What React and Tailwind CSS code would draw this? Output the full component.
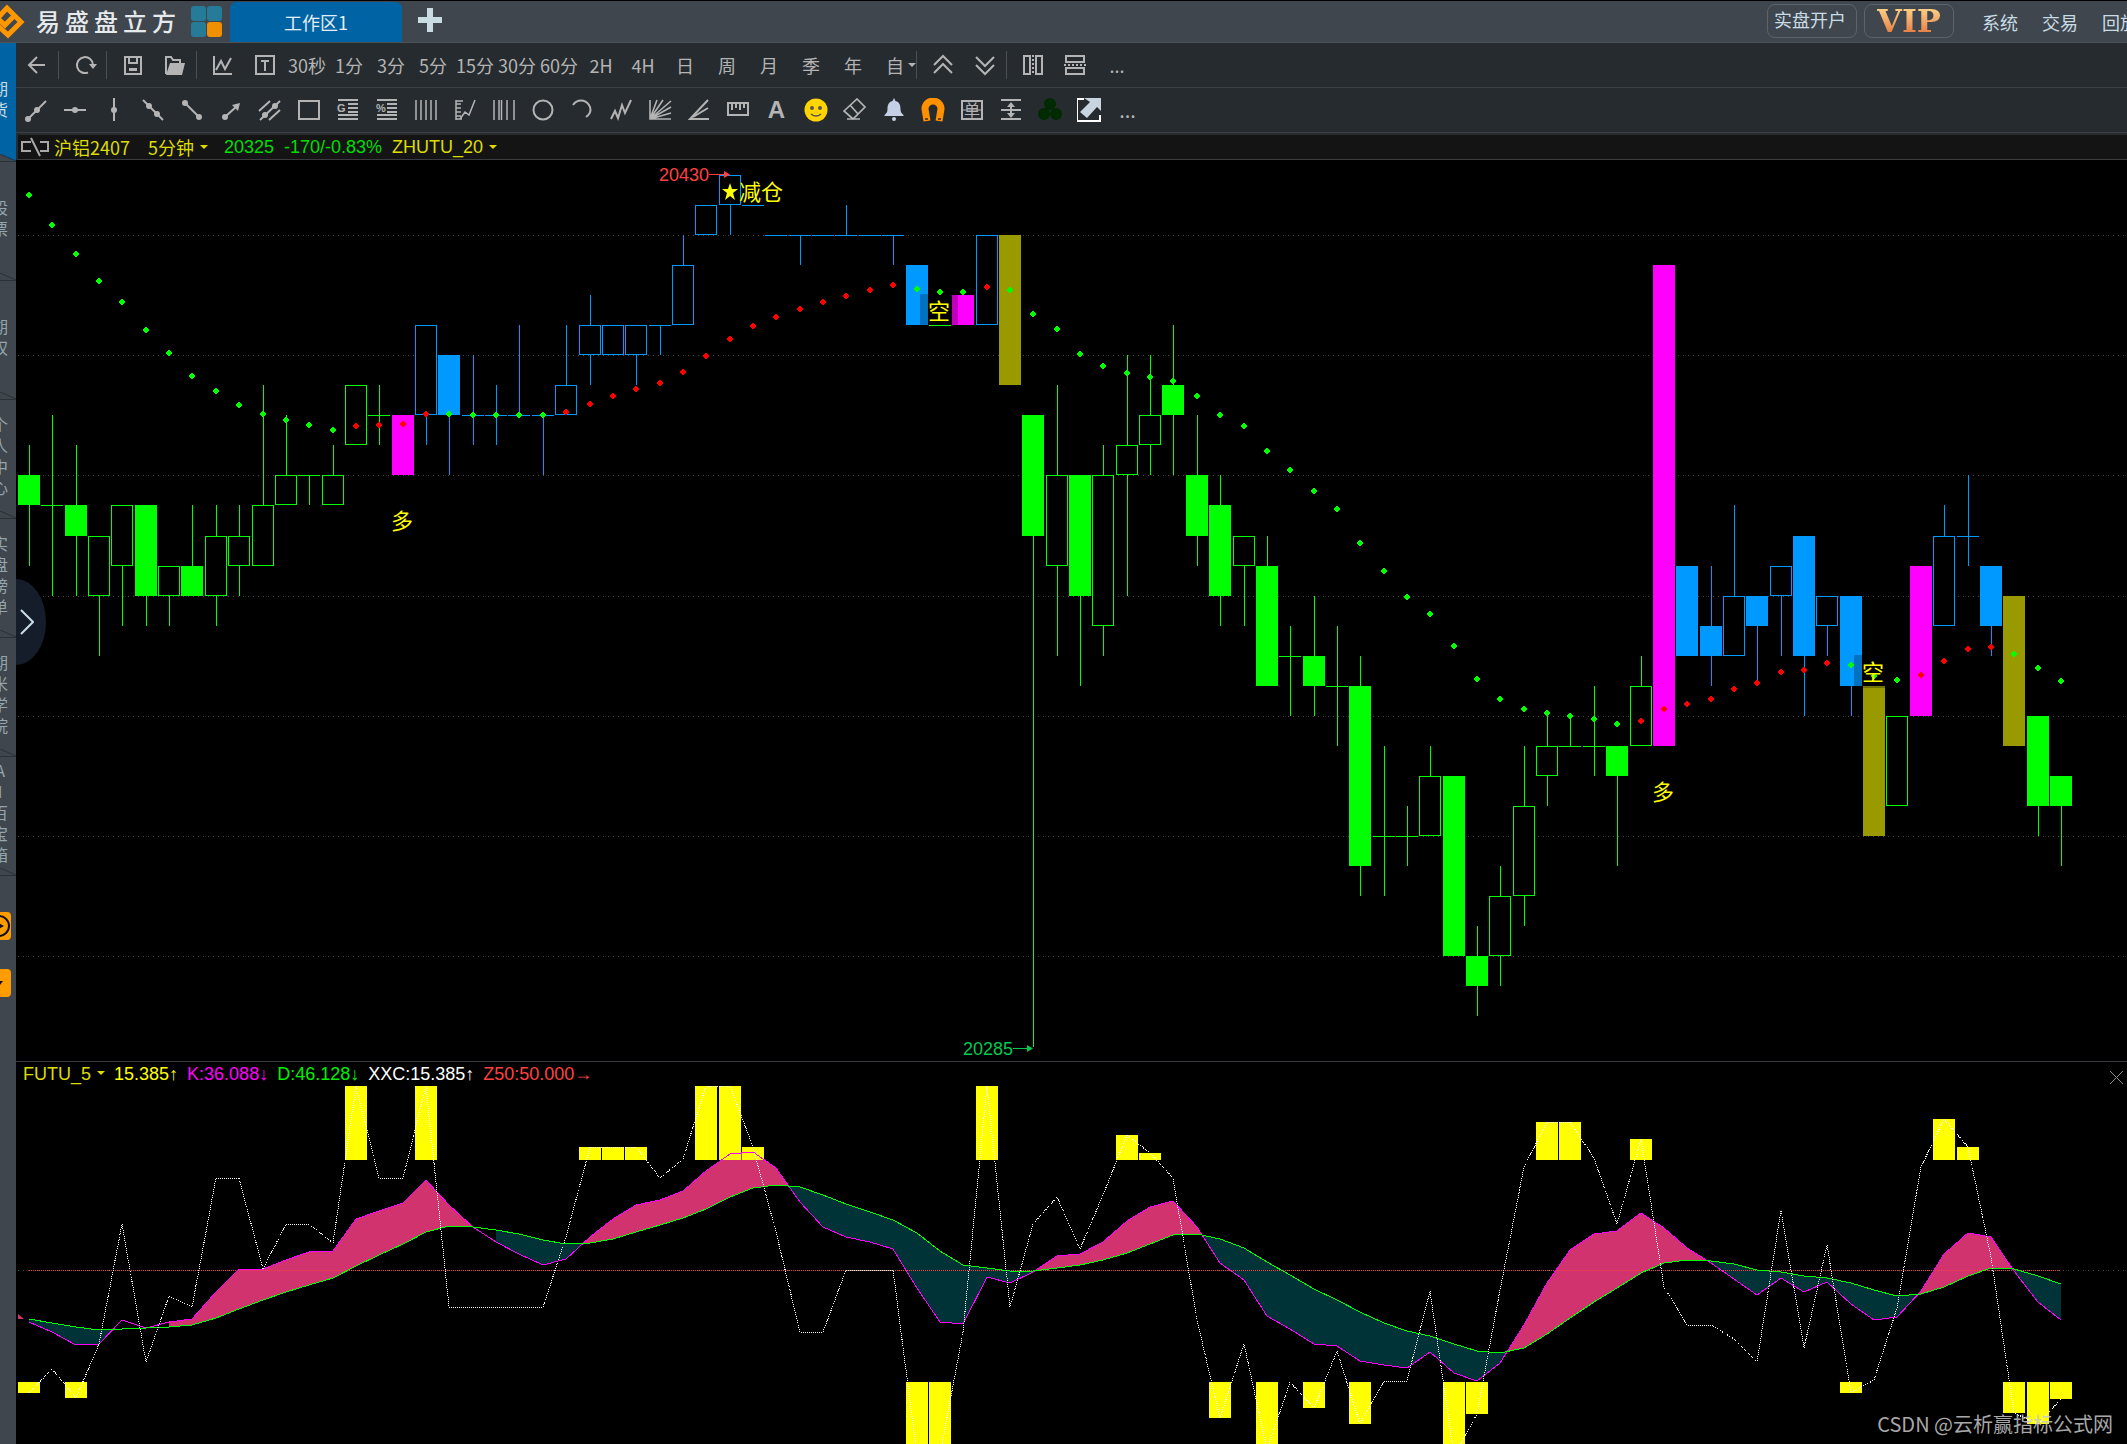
import React, { useState } from 'react';

const GREEN = '#00ff00';
const BLUE = '#0099ff';
const MAGENTA = '#ff00ff';
const OLIVE = '#999900';

const COLORS = { G: GREEN, B: BLUE, M: MAGENTA, Y: OLIVE };

// [color, filled, body top, body bottom, high, low], counted in ticks of 5 below 20430
const candles = [
  ['G', 1, 10, 11, 9, 13], ['G', 0, 11, 11, 8, 14], ['G', 1, 11, 12, 9, 14], ['G', 0, 12, 14, 12, 16],
  ['G', 0, 11, 13, 11, 15], ['G', 1, 11, 14, 11, 15], ['G', 0, 13, 14, 13, 15], ['G', 1, 13, 14, 11, 14],
  ['G', 0, 12, 14, 11, 15], ['G', 0, 12, 13, 11, 14], ['G', 0, 11, 13, 7, 13], ['G', 0, 10, 11, 8, 11],
  ['G', 0, 10, 10, 10, 11], ['G', 0, 10, 11, 9, 11], ['G', 0, 7, 9, 7, 9], ['G', 0, 8, 8, 7, 9],
  ['M', 1, 8, 10, 8, 10], ['B', 0, 5, 8, 5, 9], ['B', 1, 6, 8, 6, 10], ['B', 0, 8, 8, 6, 9],
  ['B', 0, 8, 8, 7, 9], ['B', 0, 8, 8, 5, 8], ['B', 0, 8, 8, 8, 10], ['B', 0, 7, 8, 5, 8],
  ['B', 0, 5, 6, 4, 7], ['B', 0, 5, 6, 5, 6], ['B', 0, 5, 6, 5, 7], ['B', 0, 5, 5, 5, 6],
  ['B', 0, 3, 5, 2, 5], ['B', 0, 1, 2, 1, 2], ['B', 0, 0, 1, 0, 2], ['B', 0, 1, 1, 1, 1],
  ['B', 0, 2, 2, 2, 2], ['B', 0, 2, 2, 2, 3], ['B', 0, 2, 2, 2, 2], ['B', 0, 2, 2, 1, 2],
  ['B', 0, 2, 2, 2, 2], ['B', 0, 2, 2, 2, 3], ['B', 1, 3, 5, 3, 5], ['G', 0, 5, 5, 5, 5],
  ['M', 1, 4, 5, 4, 5], ['B', 0, 2, 5, 2, 5], ['Y', 1, 2, 7, 2, 7], ['G', 1, 8, 12, 8, 29],
  ['G', 0, 10, 13, 7, 16], ['G', 1, 10, 14, 10, 17], ['G', 0, 10, 15, 9, 16], ['G', 0, 9, 10, 6, 14],
  ['G', 0, 8, 9, 6, 10], ['G', 1, 7, 8, 5, 10], ['G', 1, 10, 12, 8, 13], ['G', 1, 11, 14, 10, 15],
  ['G', 0, 12, 13, 12, 15], ['G', 1, 13, 17, 12, 17], ['G', 0, 16, 16, 15, 18], ['G', 1, 16, 17, 14, 18],
  ['G', 0, 17, 17, 15, 19], ['G', 1, 17, 23, 16, 24], ['G', 0, 22, 22, 19, 24], ['G', 0, 22, 22, 21, 23],
  ['G', 0, 20, 22, 19, 22], ['G', 1, 20, 26, 20, 26], ['G', 1, 26, 27, 25, 28], ['G', 0, 24, 26, 23, 27],
  ['G', 0, 21, 24, 19, 25], ['G', 0, 19, 20, 18, 21], ['G', 0, 19, 19, 18, 19], ['G', 0, 19, 19, 17, 20],
  ['G', 1, 19, 20, 19, 23], ['G', 0, 17, 19, 16, 19], ['M', 1, 3, 19, 3, 19], ['B', 1, 13, 16, 13, 16],
  ['B', 1, 15, 16, 13, 17], ['B', 0, 14, 16, 11, 16], ['B', 1, 14, 15, 14, 17], ['B', 0, 13, 14, 13, 16],
  ['B', 1, 12, 16, 12, 18], ['B', 0, 14, 15, 14, 16], ['B', 1, 14, 17, 14, 18], ['Y', 1, 17, 22, 17, 22],
  ['G', 0, 18, 21, 18, 21], ['M', 1, 13, 18, 13, 18], ['B', 0, 12, 15, 11, 15], ['B', 0, 12, 12, 10, 13],
  ['B', 1, 13, 15, 13, 16], ['Y', 1, 14, 19, 14, 19], ['G', 1, 18, 21, 18, 22], ['G', 1, 20, 21, 20, 23],
];

const average = [
  195, 225, 254, 281, 302, 330, 353, 376, 391, 405, 414, 420, 425, 430, 426, 425, 424, 414, 414, 415, 415, 415,
  415, 412, 404, 396, 389, 383, 372, 356, 339, 326, 317, 309, 302, 296, 290, 285, 289, 292, 292, 287, 290, 314,
  329, 354, 366, 373, 377, 381, 396, 415, 426, 451, 470, 491, 509, 543, 571, 597, 614, 646, 679, 699, 709, 713,
  716, 719, 724, 721, 709, 704, 699, 689, 683, 672, 670, 663, 665, 676, 680, 675, 661, 649, 647, 654, 668, 681,
];

// runs of bars where the average is rising
const rising = [[14, 17], [23, 37], [41, 41], [69, 77], [81, 84]];

const xxc = [
  1393, 1369, 1398, 1344, 1224, 1362, 1296, 1307, 1178, 1178, 1269, 1224, 1224, 1243, 1086, 1178, 1178, 1086,
  1307, 1307, 1307, 1307, 1307, 1237, 1147, 1147, 1147, 1178, 1159, 1086, 1086, 1147, 1232, 1332, 1332, 1270,
  1270, 1270, 1455, 1455, 1332, 1086, 1307, 1224, 1197, 1249, 1195, 1135, 1153, 1178, 1320, 1418, 1344, 1450,
  1382, 1408, 1351, 1424, 1381, 1381, 1291, 1455, 1414, 1290, 1167, 1122, 1122, 1158, 1224, 1139, 1287, 1325,
  1325, 1339, 1362, 1210, 1348, 1245, 1393, 1380, 1308, 1167, 1119, 1147, 1257, 1413, 1424, 1399,
];

const kLine = [
  1322, 1332, 1345, 1344, 1320, 1328, 1322, 1319, 1292, 1269, 1269, 1260, 1252, 1251, 1219, 1211, 1203, 1180,
  1205, 1227, 1242, 1254, 1265, 1259, 1237, 1219, 1205, 1200, 1191, 1171, 1154, 1152, 1168, 1202, 1227, 1237,
  1242, 1249, 1288, 1322, 1324, 1277, 1283, 1272, 1256, 1254, 1242, 1221, 1207, 1201, 1227, 1263, 1280, 1316,
  1329, 1344, 1346, 1361, 1365, 1368, 1352, 1373, 1381, 1363, 1325, 1283, 1250, 1234, 1231, 1213, 1228, 1248,
  1263, 1279, 1295, 1278, 1292, 1282, 1304, 1320, 1317, 1291, 1254, 1233, 1237, 1271, 1302, 1320,
];

const dLine = [
  1319, 1323, 1327, 1330, 1329, 1328, 1327, 1325, 1318, 1309, 1300, 1292, 1285, 1278, 1266, 1255, 1244, 1232,
  1226, 1227, 1230, 1234, 1240, 1244, 1243, 1239, 1232, 1225, 1218, 1209, 1197, 1188, 1185, 1187, 1195, 1204,
  1212, 1220, 1233, 1251, 1265, 1268, 1271, 1271, 1268, 1265, 1260, 1253, 1244, 1235, 1234, 1239, 1248, 1262,
  1275, 1289, 1300, 1312, 1323, 1331, 1336, 1344, 1351, 1353, 1348, 1334, 1318, 1302, 1288, 1273, 1263, 1260,
  1261, 1264, 1270, 1272, 1276, 1278, 1283, 1290, 1296, 1294, 1287, 1276, 1268, 1269, 1276, 1284,
];

const barX = (i) => Math.round(18 + i * 23.356);
const midX = (i) => barX(i) + 11;
const tickY = (t) => Math.round(174.8 + t * 30.06);
const toPoints = (values) => values.map((v, i) => `${midX(i)},${v}`).join(' ');
const isRising = (i) => rising.some(([from, to]) => i >= from && i <= to);

const PINK = '#d1336f';
const TEAL = '#003338';
const unfilled = [4, 5, 19];

function bandPieces() {
  const pieces = [];
  for (let i = 0; i < kLine.length - 1; i++) {
    if (unfilled.includes(i)) continue;
    const x1 = midX(i);
    const x2 = midX(i + 1);
    const a = dLine[i] - kLine[i];
    const b = dLine[i + 1] - kLine[i + 1];
    if (a * b >= 0) {
      pieces.push([a + b > 0 ? PINK : TEAL, `${x1},${kLine[i]} ${x2},${kLine[i + 1]} ${x2},${dLine[i + 1]} ${x1},${dLine[i]}`]);
    } else {
      const r = a / (a - b);
      const cx = x1 + (x2 - x1) * r;
      const cy = kLine[i] + (kLine[i + 1] - kLine[i]) * r;
      pieces.push([a > 0 ? PINK : TEAL, `${x1},${kLine[i]} ${cx},${cy} ${x1},${dLine[i]}`]);
      if (i !== 3) pieces.push([b > 0 ? PINK : TEAL, `${x2},${kLine[i + 1]} ${cx},${cy} ${x2},${dLine[i + 1]}`]);
    }
  }
  return pieces;
}

function Icon({ children, size = 24, sw = 2 }) {
  return (
    <svg width={size} height={size} viewBox="0 0 24 24" fill="none" stroke="#b4b4b4" strokeWidth={sw} aria-hidden="true">
      {children}
    </svg>
  );
}

function Dot({ x, y }) {
  return <circle cx={x} cy={y} r="3" fill="#b4b4b4" stroke="none" />;
}

function Caret({ className }) {
  return (
    <svg width="8" height="5" viewBox="0 0 8 5" className={className} aria-hidden="true">
      <path d="M0 0h8L4 4z" fill="currentColor" />
    </svg>
  );
}

const fileIcons = {
  back: <Icon><path d="M20 12H5M12 4l-8 8 8 8" /></Icon>,
  refresh: <Icon><path d="M15 19.5A8 8 0 1 1 20 12" /><path d="M16 11h8l-4 5z" fill="#b4b4b4" stroke="none" /></Icon>,
  save: <Icon><path d="M4 4h16v17H4zM8 4v6h8V4M8 16h8" /><path d="M8 17h8" /></Icon>,
  open: <Icon><path d="M3 21V4h5l2 3h7v3" /><path d="M7 10h15l-3 12H3z" fill="#b4b4b4" stroke="none" /></Icon>,
  line: <Icon><path d="M3 3v18h18M5 17l5-9 4 8 6-11" /></Icon>,
  text: <Icon><path d="M3 3h18v18H3zM8 8h8M12 8v10" /></Icon>,
};

const drawIcons = [
  ['射线', <Icon><path d="M4 21L22 3" /><Dot x={4} y={21} /><Dot x={13} y={12} /></Icon>],
  ['水平线', <Icon><path d="M1 12h22" /><Dot x={12} y={12} /></Icon>],
  ['垂直线', <Icon><path d="M12 0v23" /><Dot x={12} y={12} /></Icon>],
  ['直线', <Icon><path d="M2 2l20 20" /><Dot x={8} y={8} /><Dot x={16} y={16} /></Icon>],
  ['线段', <Icon><path d="M5 5l14 14" /><Dot x={5} y={5} /><Dot x={19} y={19} /></Icon>],
  ['箭头', <Icon><path d="M6 19L18 8" /><path d="M21 5l-2 8-6-6z" fill="#b4b4b4" stroke="none" /><Dot x={6} y={19} /></Icon>],
  ['平行线', <Icon><path d="M2 22L22 3M1 13L12 3M11 22l11-10" /><Dot x={7} y={17} /><Dot x={17} y={8} /></Icon>],
  ['矩形', <Icon><path d="M2 3h20v18H2z" /></Icon>],
  ['黄金分割', (
    <Icon>
      <path d="M2 2h20M12 6h10M12 10h10M12 14h10M2 17h20M2 21h20" />
      <text x="1" y="14" fontSize="11" fontWeight="700" fontFamily="Liberation Sans, sans-serif" fill="#b4b4b4" stroke="none">G</text>
    </Icon>
  )],
  ['百分比', (
    <Icon>
      <path d="M2 2h20M12 6h10M12 10h10M12 14h10M2 17h20M2 21h20" />
      <text x="1" y="14" fontSize="11" fontWeight="700" fontFamily="Liberation Sans, sans-serif" fill="#b4b4b4" stroke="none">%</text>
    </Icon>
  )],
  ['周期线', <Icon sw={1.5}><path d="M2 2v20M7 2v20M12 2v20M17 2v20M22 2v20" /></Icon>],
  ['波段', <Icon sw={1.5}><path d="M3 2v20M3 3h7M3 6h5M3 10h5M3 14h5M3 18h5M3 21h6M7 21l5-7 4 3 6-15" /></Icon>],
  ['斐波那契', <Icon sw={1.5}><path d="M2 2v20M7 2v20M9.500 2v20M15 2v20M22 2v20" /></Icon>],
  ['圆', <Icon><circle cx="12" cy="12" r="9.500" /></Icon>],
  ['圆弧', <Icon><path d="M3 7c4-6 12-6 16 0 3 5 1 9-3 12" /></Icon>],
  ['折线', <Icon><path d="M2 21l4-8 3 7 4-13 3 8 6-13" /></Icon>],
  ['扇形', <Icon sw={1.6}><path d="M2 2v19h21M2 21L9 2M2 21L15 2M2 21L23 3M2 21L23 9M2 21L23 15" /></Icon>],
  ['角度线', <Icon><path d="M21 2L3 21h19M6 19l15-9" /></Icon>],
  ['标尺', <Icon><path d="M2 5h20v12H2z" /><path d="M6 6v6M10 6v4M14 6v6M18 6v4" /></Icon>],
  ['文字', <span className="font-['Liberation_Sans',sans-serif] text-2xl leading-6 font-bold text-[#b4b4b4]">A</span>],
  ['表情', (
    <Icon>
      <circle cx="12" cy="12" r="11.500" fill="#ffd400" stroke="none" />
      <circle cx="8" cy="10" r="2" fill="#555" stroke="none" />
      <circle cx="16" cy="10" r="2" fill="#555" stroke="none" />
      <path d="M7 16c3 2.500 7 2.500 10 0" stroke="#555" strokeWidth="1.500" />
    </Icon>
  )],
  ['橡皮', <Icon sw={1.7}><path d="M1 13L14 1l8 8L10 21zM7 7l8 9M4 21h13" /></Icon>],
  ['预警', (
    <Icon>
      <path d="M12 0l1.500 3c4 1 5 4 5 8 0 3 1 4 3 6v1h-19v-1c2-2 3-3 3-6 0-4 1-7 5-8z" fill="#c3d0e6" stroke="none" />
      <circle cx="12" cy="21" r="2" fill="#c3d0e6" stroke="none" />
    </Icon>
  )],
  ['磁铁', (
    <Icon>
      <path d="M6 23L4 11a8 8 0 1 1 16 0l-2 12" stroke="#ff9000" strokeWidth="7" />
      <path d="M4 21h3M17 21h3" stroke="#6b430c" strokeWidth="2" />
    </Icon>
  )],
  ['画线下单', (
    <Icon>
      <path d="M2 3h20v18H2z" />
      <path d="M1 12h22" strokeWidth="1" />
      <text x="4" y="18" fontSize="16" fontFamily="Noto Sans CJK SC, sans-serif" fill="#b4b4b4" stroke="none">单</text>
    </Icon>
  )],
  ['间距', <Icon><path d="M2 2h20M2 12h20M2 21h20M12 6v12" /><path d="M12 4l4 5H8zM12 20l4-5H8z" fill="#b4b4b4" stroke="none" /></Icon>],
  ['三叶草', (
    <Icon>
      <g fill="#002a00" stroke="none">
        <circle cx="12" cy="6" r="6" />
        <circle cx="6" cy="16" r="6" />
        <circle cx="18" cy="16" r="6" />
      </g>
    </Icon>
  )],
  ['弹出', (
    <Icon>
      <path d="M7 1H0v22h23v-6" stroke="#fff" strokeWidth="2" />
      <path d="M7 0h17v13l-4-4-10 11-7-6L13 4z" fill="#c8d4de" stroke="none" />
    </Icon>
  )],
];

const periods = ['30秒', '1分', '3分', '5分', '15分', '30分', '60分', '2H', '4H', '日', '周', '月', '季', '年'];
const sideTabs = ['期货', '股票', '期权', '个人中心', '实盘榜单', '期米学院', 'AI百宝箱'];

function Divider() {
  return <div className="mr-[5px] h-7 w-px shrink-0 bg-[#4b4f53]" />;
}

function ToolButton({ label, onClick, children }) {
  return (
    <button type="button" aria-label={label} onClick={onClick} className="flex h-full w-[42px] shrink-0 items-center justify-center whitespace-nowrap">
      {children}
    </button>
  );
}

function TitleBar() {
  return (
    <header className="flex h-[43px] items-start overflow-hidden border-t border-b border-t-black border-b-[#4a5258] bg-[#40464d]">
      <svg width="26" height="42" viewBox="0 0 26 42" className="shrink-0" aria-hidden="true">
        <path d="M-6 21L7 7l14 14L8 34z" fill="none" stroke="#ff9800" strokeWidth="5" />
        <path d="M-4 16l9 8 8-8" fill="none" stroke="#ff9800" strokeWidth="5" />
      </svg>
      <h1 className="ml-[10px] flex gap-[5px] text-2xl leading-10 font-medium text-[#e6eaec]">
        {'易盛盘立方'.split('').map((c) => <span key={c}>{c}</span>)}
      </h1>
      <div className="mt-[5px] ml-[15px] grid shrink-0 grid-cols-2 gap-px">
        <span className="size-[15px] rounded-[3px] bg-[#267b99]" />
        <span className="size-[15px] rounded-[3px] bg-[#267b99]" />
        <span className="size-[15px] rounded-[3px] bg-[#267b99]" />
        <span className="size-[15px] rounded-[3px] bg-[#ee9000]" />
      </div>
      <button type="button" className="mt-px ml-2 h-10 w-[172px] shrink-0 rounded-t-md bg-[#0064a4] text-lg text-[#e4eef5]">工作区1</button>
      <button type="button" aria-label="新建工作区" className="ml-4 mt-[7px] shrink-0">
        <svg width="24" height="24" viewBox="0 0 24 24" aria-hidden="true">
          <path d="M9 0h6v9h9v6h-9v9H9v-9H0V9h9z" fill="#c8dce4" />
        </svg>
      </button>
      <div className="-mr-[11px] ml-auto flex shrink-0 text-lg text-[#c8dce6]">
        <button type="button" className="mt-[3px] h-[34px] w-[90px] rounded-lg border border-[#5c646a] pr-1 pb-1 leading-7">实盘开户</button>
        <button type="button" className="mt-[3px] ml-[7px] flex h-[34px] w-[90px] items-center justify-center rounded-lg border border-[#5c646a]">
          <span className="bg-linear-to-b from-[#ffdc90] to-[#e07038] bg-clip-text font-['DejaVu_Serif',serif] text-[32px] leading-8 font-bold text-transparent">VIP</span>
        </button>
        <nav className="ml-7 flex gap-6 leading-[42px]">
          <a href="#system">系统</a>
          <a href="#trade">交易</a>
          <a href="#replay">回放</a>
        </nav>
      </div>
    </header>
  );
}

function SideBar() {
  return (
    <aside className="flex w-4 shrink-0 flex-col overflow-hidden bg-[#40464d] text-base leading-[21px]">
      {sideTabs.map((tab, n) => (
        <button key={tab} type="button" className={`relative flex h-[119px] shrink-0 items-center justify-end pr-2 pb-2 ${n === 0 ? 'bg-[#0064a4] text-[#c8dce6]' : 'text-[#93a5af]'}`}>
          <span className="flex flex-col items-center">
            {tab.split('').map((c) => <span key={c}>{c}</span>)}
          </span>
          <svg width="16" height="8" viewBox="0 0 16 8" className="absolute bottom-0 left-0" aria-hidden="true">
            <path d="M0 0v8h16z" fill="#40464d" />
            <path d="M0 0l16 7M0 7.500h16" stroke="#2b3136" fill="none" />
          </svg>
        </button>
      ))}
      <button type="button" aria-label="播放" className="mt-9 h-7 w-[11px] shrink-0 overflow-hidden rounded-r-sm bg-[#ff9c00]">
        <svg width="11" height="28" viewBox="0 0 11 28" aria-hidden="true">
          <circle cx="-1" cy="14" r="10" fill="none" stroke="#111" strokeWidth="2" />
          <path d="M-3 10l7 4-7 4z" fill="#111" />
        </svg>
      </button>
      <button type="button" aria-label="更多" className="mt-[29px] h-7 w-[11px] shrink-0 rounded-r-sm bg-[#ff9c00]">
        <svg width="11" height="28" viewBox="0 0 11 28" aria-hidden="true">
          <path d="M-4 12h7l-3 4z" fill="#111" />
        </svg>
      </button>
    </aside>
  );
}

function PeriodBar() {
  const [, setPeriod] = useState('5分');
  return (
    <div className="flex h-[45px] items-center overflow-hidden border-b border-[#3a4045] text-lg text-[#b4b4b4]">
      <ToolButton label="返回">{fileIcons.back}</ToolButton>
      <Divider />
      <ToolButton label="刷新">{fileIcons.refresh}</ToolButton>
      <Divider />
      <ToolButton label="保存">{fileIcons.save}</ToolButton>
      <ToolButton label="打开">{fileIcons.open}</ToolButton>
      <Divider />
      <ToolButton label="分时图">{fileIcons.line}</ToolButton>
      <ToolButton label="文本">{fileIcons.text}</ToolButton>
      {periods.map((p) => (
        <ToolButton key={p} label={p} onClick={() => setPeriod(p)}>{p}</ToolButton>
      ))}
      <ToolButton label="自定义">
        <span className="flex items-center gap-1 pl-3">
          自
          <Caret className="shrink-0" />
        </span>
      </ToolButton>
      <Divider />
      <ToolButton label="放大"><Icon><path d="M3 12l9-9 9 9M3 20l9-9 9 9" /></Icon></ToolButton>
      <ToolButton label="缩小"><Icon><path d="M3 4l9 9 9-9M3 12l9 9 9-9" /></Icon></ToolButton>
      <Divider />
      <ToolButton label="左右分屏"><Icon><path d="M3 3h6v18H3zM15 3h6v18h-6z" /><path d="M12 2v20" strokeDasharray="2 2" /></Icon></ToolButton>
      <ToolButton label="上下分屏"><Icon><path d="M3 3h18v6H3zM3 15h18v6H3z" /><path d="M1 12h22" strokeDasharray="2 2" /></Icon></ToolButton>
      <ToolButton label="更多">...</ToolButton>
    </div>
  );
}

function DrawBar() {
  return (
    <div className="flex h-[45px] items-center overflow-hidden border-b border-[#3a4045] text-lg text-[#b4b4b4]">
      {drawIcons.map(([label, icon]) => (
        <button key={label} type="button" aria-label={label} className="flex h-full w-[39px] shrink-0 items-center justify-center">{icon}</button>
      ))}
      <button type="button" aria-label="更多" className="h-full w-[39px] shrink-0 text-xl">...</button>
    </div>
  );
}

function Picker({ label, value }) {
  return (
    <label className="flex items-center">
      <select aria-label={label} defaultValue={value} className="field-sizing-content appearance-none bg-transparent">
        <option>{value}</option>
      </select>
      <Caret className="ml-[6px]" />
    </label>
  );
}

function InfoBar() {
  return (
    <div className="mt-[2px] ml-[2px] flex h-[25px] items-center overflow-hidden border-b border-[#3a3c40] bg-[#141414] font-['Liberation_Sans','Noto_Sans_CJK_SC',sans-serif] text-lg whitespace-nowrap text-[#dddd00]">
      <svg width="30" height="20" viewBox="0 0 30 20" className="ml-[3px]" fill="none" stroke="#a8a8a8" strokeWidth="2" aria-hidden="true">
        <path d="M10 5H1v9h9M19 5h8v9h-8M10 1l9 18" />
      </svg>
      <h2 className="ml-[3px] font-['Noto_Sans_CJK_SC',sans-serif]">沪铝2407</h2>
      <div className="ml-[18px] font-['Noto_Sans_CJK_SC',sans-serif]">
        <Picker label="周期" value="5分钟" />
      </div>
      <span className="ml-4 text-[#00dd00]">20325</span>
      <span className="ml-[10px] text-[#00dd00]">-170/-0.83%</span>
      <div className="ml-[10px]">
        <Picker label="主图指标" value="ZHUTU_20" />
      </div>
    </div>
  );
}

function Candle({ data, i }) {
  const [c, filled, top, bottom, high, low] = data;
  const color = COLORS[c];
  const x = barX(i);
  const y1 = tickY(top);
  const y2 = tickY(bottom);
  return (
    <g fill={color}>
      {high < top && <rect x={x + 11} y={tickY(high)} width="1" height={y1 - tickY(high)} />}
      {low > bottom && <rect x={x + 11} y={y2} width="1" height={tickY(low) - y2} />}
      {top === bottom && <rect x={x} y={y1} width="22" height="1" />}
      {top !== bottom && filled === 1 && <rect x={x} y={y1} width="22" height={y2 - y1} />}
      {top !== bottom && filled === 0 && (
        <rect x={x + 0.5} y={y1 + 0.5} width="21" height={y2 - y1 - 1} fill="#000" stroke={color} />
      )}
    </g>
  );
}

function PriceChart() {
  return (
    <svg viewBox="16 160 2111 901" className="block h-auto w-full" role="img" aria-label="沪铝2407 5分钟 K线">
      <g shapeRendering="crispEdges">
        {[2, 6, 10, 14, 18, 22, 26].map((t) => (
          <path key={t} d={`M18 ${tickY(t) + 0.5}H2127`} stroke="#484848" strokeDasharray="1 4" />
        ))}
        {candles.map((c, i) => <Candle key={i} data={c} i={i} />)}
        <rect x="920" y="294" width="38" height="31" fillOpacity="0.25" />
        <rect x="1854" y="655" width="38" height="33" fillOpacity="0.25" />
        {average.map((y, i) => (
          <path key={i} d={`M${midX(i) - 1} ${y - 3}h2v1h1v1h1v2h-1v1h-1v1h-2v-1h-1v-1h-1v-2h1v-1h1z`} fill={isRising(i) ? '#ff0000' : GREEN} />
        ))}
        <path d="M709 174.500h16" stroke="#ff4040" />
        <path d="M1013 1048.500h14" stroke="#00c850" />
      </g>
      <path d="M724 171l6 3.500-6 3.500z" fill="#ff4040" />
      <path d="M1027 1045l6 3.500-6 3.500z" fill="#00c850" />
      <g fontFamily="Liberation Sans, sans-serif" fontSize="18">
        <text x="659" y="181" fill="#ff4040">20430</text>
        <text x="963" y="1055" fill="#00c850">20285</text>
      </g>
      <path d="M730 183l2 6h6l-5 4 2 7-5-4-5 4 2-7-5-4h6z" fill="#ffff00" />
      <g fontFamily="Noto Sans CJK SC, sans-serif" fontSize="22" fill="#ffff00">
        <text x="739" y="200">减仓</text>
        <text x="391" y="529">多</text>
        <text x="928" y="319">空</text>
        <text x="1652" y="800">多</text>
        <text x="1862" y="680">空</text>
      </g>
    </svg>
  );
}

function IndicatorChart() {
  return (
    <svg viewBox="16 1085 2111 359" className="block h-auto w-full" role="img" aria-label="FUTU_5">
      <path d="M18 1270.500H2127" stroke="#484848" strokeDasharray="1 4" shapeRendering="crispEdges" />
      <path d="M18 1314l6 5h-6z" fill={PINK} />
      <g shapeRendering="crispEdges">
        {bandPieces().map(([color, points], i) => <polygon key={i} points={points} fill={color} />)}
        {xxc.map((v, i) => {
          if (v < 1157) return <rect key={i} x={barX(i)} y={v} width="22" height={1160 - v} fill="#ffff00" />;
          if (v > 1386) return <rect key={i} x={barX(i)} y="1382" width="22" height={v - 1382} fill="#ffff00" />;
          return null;
        })}
        <g fill="none">
          <path d="M29 1270.500H2060" stroke="#ff4040" strokeDasharray="1 1" />
          <polyline points={toPoints(kLine)} stroke={MAGENTA} />
          <polyline points={toPoints(dLine)} stroke={GREEN} />
          <polyline points={toPoints(xxc)} stroke="#ffffff" strokeDasharray="1 1" />
        </g>
      </g>
    </svg>
  );
}

function IndicatorPanel() {
  return (
    <section className="relative border-t border-[#3a3a40]">
      <div className="flex h-[23px] items-center gap-[9px] pl-[7px] font-['Liberation_Sans',sans-serif] text-lg whitespace-nowrap">
        <span className="text-[#dddd00]"><Picker label="副图指标" value="FUTU_5" /></span>
        <span className="text-[#ffff00]">15.385↑</span>
        <span className="text-[#ff00ff]">K:36.088↓</span>
        <span className="text-[#00f000]">D:46.128↓</span>
        <span className="text-white">XXC:15.385↑</span>
        <span className="text-[#ff4040]">Z50:50.000→</span>
      </div>
      <button type="button" aria-label="关闭" className="absolute top-[9px] right-1">
        <svg width="13" height="13" viewBox="0 0 13 13" stroke="#8a8a8a" aria-hidden="true">
          <path d="M0 0l13 13M13 0L0 13" />
        </svg>
      </button>
      <IndicatorChart />
      <p className="absolute right-[14px] bottom-1 text-xl leading-8 text-[#c8c8c8]/85">CSDN @云析赢指标公式网</p>
    </section>
  );
}

export default function App() {
  return (
    <div className="flex min-h-screen flex-col bg-black font-['Noto_Sans_CJK_SC',sans-serif]">
      <TitleBar />
      <div className="flex flex-1">
        <SideBar />
        <main className="min-w-0 flex-1">
          <div className="bg-[#262b2f]">
            <PeriodBar />
            <DrawBar />
            <InfoBar />
          </div>
          <div className="relative">
            <PriceChart />
            <button type="button" aria-label="展开" className="absolute top-[419px] left-0 flex h-[86px] w-[30px] items-center rounded-[0_100%_100%_0/0_50%_50%_0] bg-[#161d2a] pl-1">
              <svg width="14" height="26" viewBox="0 0 14 26" fill="none" stroke="#c8dce6" strokeWidth="2" aria-hidden="true">
                <path d="M1 1l12 12L1 25" />
              </svg>
            </button>
          </div>
          <IndicatorPanel />
        </main>
      </div>
    </div>
  );
}
